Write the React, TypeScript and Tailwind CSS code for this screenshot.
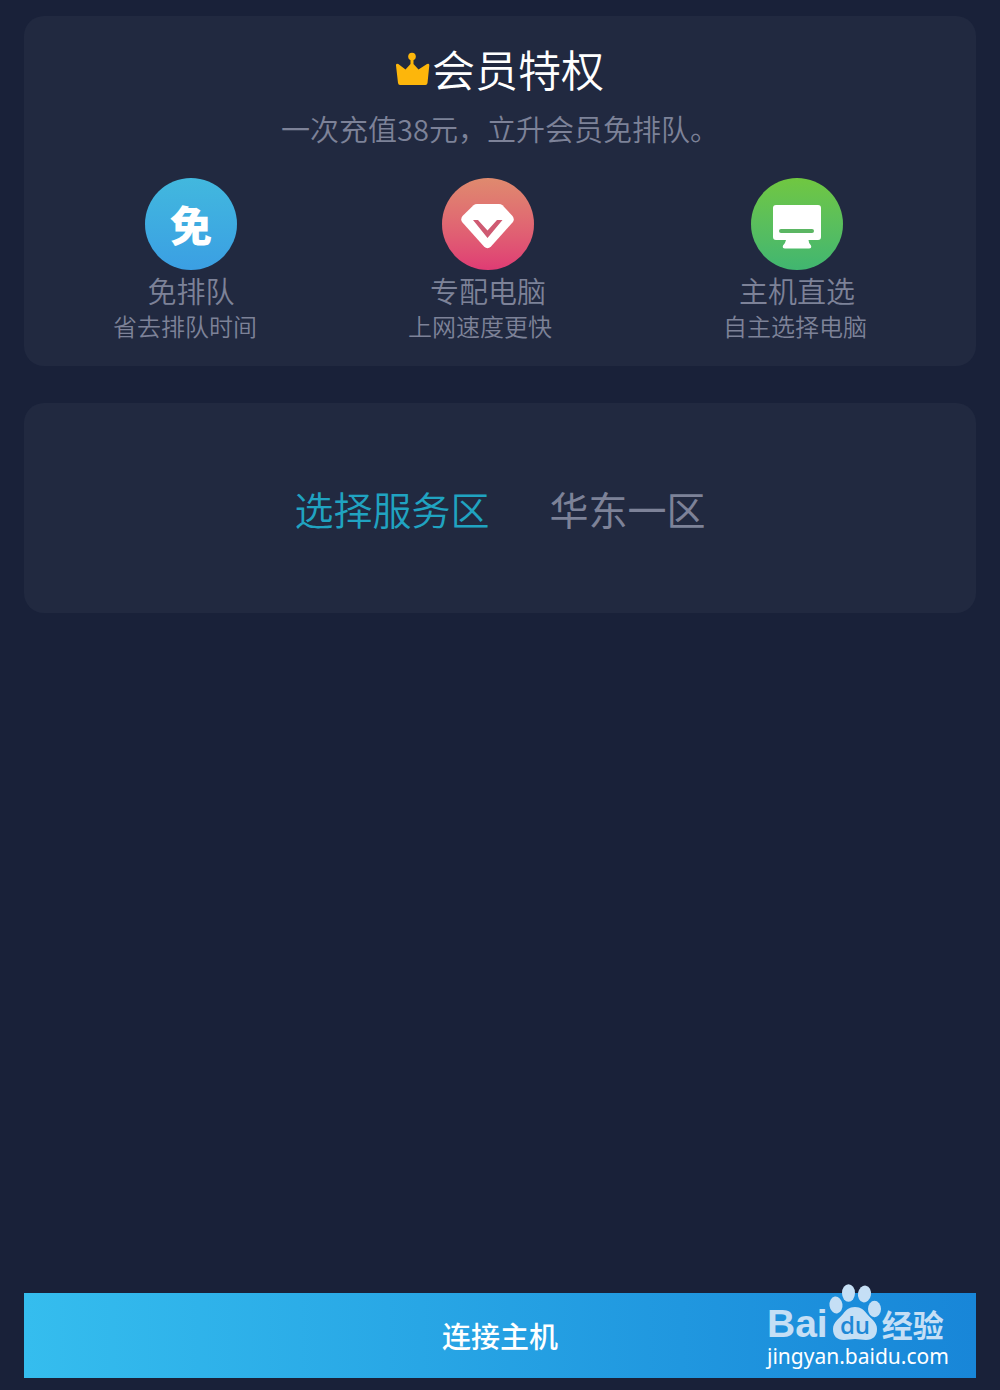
import type { ReactNode } from "react";

type Perk = {
  title: string;
  desc: string;
  badge: string; // gradient of the round badge
  shift: string; // badge and title sit a little right of the description
  icon: ReactNode;
};

/** ========= Icons ========= */
function CrownIcon() {
  return (
    <svg viewBox="0 -1 36 34" className="h-[34px] w-9" fill="#fdb60b" aria-hidden="true">
      <circle cx="16" cy="4.5" r="3.8" />
      <path d="M14.500 6h3v6l5 5.500L31 12q2.500-.8 2.300 1.500L31.500 31q-.3 2-2 2H4q-1.700 0-2-2L0 13.500Q-.2 11.200 2.300 12L9.500 17.500l5-5.500z" />
    </svg>
  );
}

function GemIcon() {
  return (
    <svg viewBox="0 0 92 92" className="size-full" aria-hidden="true">
      <path
        d="M35 26h22q2 0 3.500 1.200l10 10.800q2.600 3.500 0 6.500L49 68.500q-3.500 3.500-7 0L20.500 44.500q-2.600-3 0-6.500l11-10.800Q33 26 35 26z"
        fill="#fff"
      />
      <path d="M31 42h5l9.500 10.500L55 42h5.500L45.500 60z" fill="#cf5a72" />
    </svg>
  );
}

function MonitorIcon() {
  return (
    <svg viewBox="0 0 92 92" className="size-full" aria-hidden="true">
      <path
        d="M25 27h42q3 0 3 3v29q0 3-3 3H57.500q0 3 2.500 5.500 1 3-2 3H34q-3 0-2-3 2.500-2.500 3-5.500H25q-3 0-3-3V30q0-3 3-3z"
        fill="#fff"
      />
      <rect x="28" y="51" width="35" height="4" rx="2" fill="#5bb663" />
    </svg>
  );
}

function PawIcon() {
  return (
    <svg viewBox="0 0 54 58" className="h-[58px] w-[54px] shrink-0" fill="currentColor" aria-hidden="true">
      <ellipse cx="8" cy="21" rx="6.500" ry="8.500" transform="rotate(-8 8 21)" />
      <ellipse cx="20.500" cy="9" rx="6.500" ry="8.800" />
      <ellipse cx="36.500" cy="10" rx="6.500" ry="8.500" transform="rotate(10 36.500 10)" />
      <ellipse cx="46.500" cy="25" rx="6.500" ry="8.300" />
      <path d="M27 23c6 0 9 3 12 7 4 5 10 8 10 15 0 7-4 11-11 11-4 0-7-1-11-1s-7 1-11 1C9 56 5 52 5 45c0-7 6-10 10-15 3-4 6-7 12-7z" />
      <text
        x="27"
        y="50"
        textAnchor="middle"
        fontSize="24"
        fontWeight="600"
        fill="#1e88d6"
        className="font-['Open_Sans',sans-serif]"
      >
        du
      </text>
    </svg>
  );
}

const perks: Perk[] = [
  {
    title: "免排队",
    desc: "省去排队时间",
    badge: "bg-linear-to-b from-[#42b8de] to-[#3b9fe3]",
    shift: "pl-3",
    icon: <span className="text-[42px] leading-none font-black">免</span>,
  },
  {
    title: "专配电脑",
    desc: "上网速度更快",
    badge: "bg-linear-to-b from-[#df8a6e] to-[#df3b74]",
    shift: "pl-4",
    icon: <GemIcon />,
  },
  {
    title: "主机直选",
    desc: "自主选择电脑",
    badge: "bg-linear-to-b from-[#70c740] to-[#40b670]",
    shift: "pl-1",
    icon: <MonitorIcon />,
  },
];

function PerkItem({ perk }: { perk: Perk }) {
  return (
    <li className="w-fit">
      <div className={`flex flex-col items-center ${perk.shift}`}>
        <div
          className={`flex size-[92px] items-center justify-center rounded-full text-white ${perk.badge}`}
        >
          {perk.icon}
        </div>
        <h2 className="text-[29px] leading-[40px]">{perk.title}</h2>
      </div>
      <p className="text-2xl leading-[32px]">{perk.desc}</p>
    </li>
  );
}

function Watermark() {
  return (
    <div className="pointer-events-none absolute right-[31px] bottom-2 w-[178px] whitespace-nowrap text-white">
      <div className="flex items-end text-[#c5dff5]">
        <span className="font-['Liberation_Sans',sans-serif] text-[39px] leading-[36px] font-bold">
          Bai
        </span>
        <PawIcon />
        <span className="text-[31px] leading-[36px] font-bold">经验</span>
      </div>
      <div className="font-['Noto_Sans',sans-serif] text-[21px] leading-[28px] font-normal">
        jingyan.baidu.com
      </div>
    </div>
  );
}

/** ========= Page ========= */
export default function App() {
  return (
    <main className="flex min-h-screen flex-col bg-[#192139] px-6 pt-4 pb-3 font-['Noto_Sans_CJK_SC',sans-serif] font-[350] text-[#7d8298]">
      <section className="rounded-[20px] bg-[#212940] pt-5 pb-6">
        <h1 className="flex items-center justify-center text-[43px] leading-[64px] text-white">
          <CrownIcon />
          会员特权
        </h1>
        <p className="text-center text-[29px] leading-[56px]">
          一次充值38元，立升会员免排队。
        </p>
        <ul className="mt-[22px] grid grid-cols-[295fr_315fr_253fr] pl-[89px]">
          {perks.map((perk) => (
            <PerkItem key={perk.title} perk={perk} />
          ))}
        </ul>
      </section>

      <section className="mt-[37px] flex items-center justify-center gap-[60px] rounded-[20px] bg-[#212940] py-[76px] text-[39px] leading-[58px]">
        <button type="button" className="text-[#20a3c1]">
          选择服务区
        </button>
        <span className="font-normal">华东一区</span>
      </section>

      <div className="relative mt-auto">
        <button
          type="button"
          className="h-[85px] w-full bg-linear-to-r from-[#35bdee] to-[#1886d8] text-[29px] font-medium text-white"
        >
          连接主机
        </button>
        <Watermark />
      </div>
    </main>
  );
}
